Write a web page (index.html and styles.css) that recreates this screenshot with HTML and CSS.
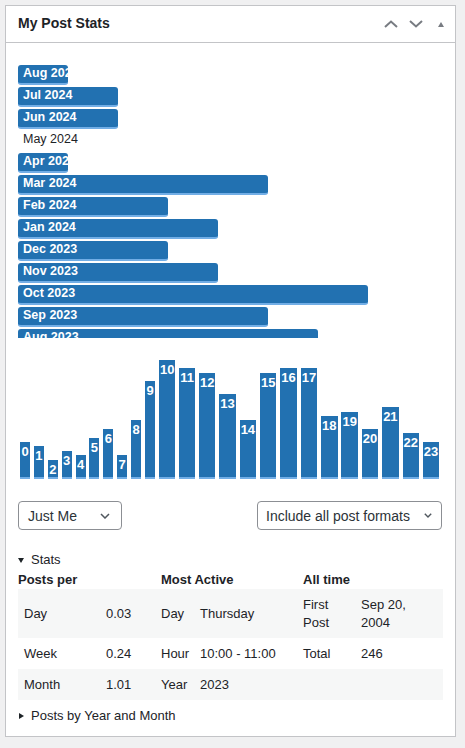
FILE: index.html
```html
<!DOCTYPE html>
<html lang="en">
<head>
<meta charset="utf-8">
<title>My Post Stats</title>
<link rel="stylesheet" href="styles.css">
</head>
<body>
<div class="postbox">
  <div class="postbox-header">
    <h2 class="title">My Post Stats</h2>
    <div class="handle-actions">
      <button class="handle-btn" aria-label="Move up">
        <svg width="14" height="8" viewBox="0 0 14 8"><polyline points="1,7 7,1.5 13,7" fill="none" stroke="#787c82" stroke-width="2"/></svg>
      </button>
      <button class="handle-btn" aria-label="Move down">
        <svg width="14" height="8" viewBox="0 0 14 8"><polyline points="1,1 7,6.5 13,1" fill="none" stroke="#787c82" stroke-width="2"/></svg>
      </button>
      <button class="handle-btn" aria-label="Toggle panel">
        <svg width="6" height="5" viewBox="0 0 6 5"><polygon points="0,5 3,0 6,5" fill="#787c82"/></svg>
      </button>
    </div>
  </div>
  <div class="inside">
    <div class="months">
      <div class="month-bar" style="width:50px">Aug 2024</div>
      <div class="month-bar" style="width:100px">Jul 2024</div>
      <div class="month-bar" style="width:100px">Jun 2024</div>
      <div class="month-bar zero">May 2024</div>
      <div class="month-bar" style="width:50px">Apr 2024</div>
      <div class="month-bar" style="width:250px">Mar 2024</div>
      <div class="month-bar" style="width:150px">Feb 2024</div>
      <div class="month-bar" style="width:200px">Jan 2024</div>
      <div class="month-bar" style="width:150px">Dec 2023</div>
      <div class="month-bar" style="width:200px">Nov 2023</div>
      <div class="month-bar" style="width:350px">Oct 2023</div>
      <div class="month-bar" style="width:250px">Sep 2023</div>
      <div class="month-bar" style="width:300px">Aug 2023</div>
      <div class="month-bar" style="width:150px">Jul 2023</div>
      <div class="month-bar" style="width:100px">Jun 2023</div>
    </div>

    <div class="hours">
      <div class="hour" style="height:37px">0</div>
      <div class="hour" style="height:33px">1</div>
      <div class="hour" style="height:19px">2</div>
      <div class="hour" style="height:28px">3</div>
      <div class="hour" style="height:24px">4</div>
      <div class="hour" style="height:41px">5</div>
      <div class="hour" style="height:50px">6</div>
      <div class="hour" style="height:24px">7</div>
      <div class="hour" style="height:59px">8</div>
      <div class="hour" style="height:98px">9</div>
      <div class="hour" style="height:119px">10</div>
      <div class="hour" style="height:111px">11</div>
      <div class="hour" style="height:106px">12</div>
      <div class="hour" style="height:85px">13</div>
      <div class="hour" style="height:59px">14</div>
      <div class="hour" style="height:106px">15</div>
      <div class="hour" style="height:111px">16</div>
      <div class="hour" style="height:111px">17</div>
      <div class="hour" style="height:63px">18</div>
      <div class="hour" style="height:67px">19</div>
      <div class="hour" style="height:50px">20</div>
      <div class="hour" style="height:72px">21</div>
      <div class="hour" style="height:46px">22</div>
      <div class="hour" style="height:37px">23</div>
    </div>

    <div class="filters">
      <div class="select select-author">
        <span>Just Me</span>
        <svg width="10" height="6" viewBox="0 0 10 6"><polyline points="1,1 5,5 9,1" fill="none" stroke="#50575e" stroke-width="1.5"/></svg>
      </div>
      <div class="select select-format">
        <span>Include all post formats</span>
        <svg width="8" height="5" viewBox="0 0 8 5"><polyline points="0.8,0.8 4,4 7.2,0.8" fill="none" stroke="#50575e" stroke-width="1.4"/></svg>
      </div>
    </div>

    <details class="section" open>
      <summary class="summary"><span class="tri-down"></span>Stats</summary>
      <table class="stats">
        <colgroup>
          <col class="c1"><col class="c2"><col class="c3"><col class="c4"><col class="c5"><col class="c6">
        </colgroup>
        <thead>
          <tr>
            <th colspan="2" class="th-first">Posts per</th>
            <th colspan="2">Most Active</th>
            <th colspan="2">All time</th>
          </tr>
        </thead>
        <tbody>
          <tr class="alt">
            <td>Day</td><td>0.03</td>
            <td>Day</td><td>Thursday</td>
            <td>First Post</td><td class="wrap">Sep 20, 2004</td>
          </tr>
          <tr>
            <td>Week</td><td>0.24</td>
            <td>Hour</td><td>10:00 - 11:00</td>
            <td>Total</td><td>246</td>
          </tr>
          <tr class="alt">
            <td>Month</td><td>1.01</td>
            <td>Year</td><td>2023</td>
            <td></td><td></td>
          </tr>
        </tbody>
      </table>
    </details>

    <details class="section section-closed">
      <summary class="summary"><span class="tri-right"></span>Posts by Year and Month</summary>
    </details>
  </div>
</div>
</body>
</html>
```

FILE: styles.css
```css
* {
  box-sizing: border-box;
}

html, body {
  margin: 0;
  padding: 0;
}

body {
  background: #f0f0f1;
  font-family: "Liberation Sans", Arial, Helvetica, sans-serif;
  font-size: 13px;
  line-height: 1.4;
  color: #1d2327;
}

.postbox {
  width: 451px;
  margin: 5px 0 0 5px;
  background: #fff;
  border: 1px solid #c3c4c7;
}

.postbox-header {
  display: flex;
  align-items: center;
  height: 37px;
  border-bottom: 1px solid #c3c4c7;
  padding: 0 2px 0 12px;
}

.title {
  flex: 1;
  margin: 0;
  font-size: 14px;
  font-weight: bold;
  line-height: 1.4;
  color: #1d2327;
}

.handle-actions {
  display: flex;
  align-items: center;
}

.handle-btn {
  width: 25px;
  height: 36px;
  padding: 0;
  margin: 0;
  border: 0;
  background: transparent;
  display: flex;
  align-items: center;
  justify-content: center;
}

.inside {
  padding: 0 12px 11px 12px;
}

.months {
  margin-top: 22px;
  height: 273px;
  overflow: hidden;
}

.month-bar {
  height: 20px;
  margin-bottom: 2px;
  padding-left: 5px;
  background: #2271b1;
  border-bottom: 2px solid #72aee6;
  border-radius: 3px;
  color: #fff;
  font-size: 12.5px;
  font-weight: bold;
  line-height: 16px;
  white-space: nowrap;
  overflow: hidden;
}

.month-bar.zero {
  width: auto;
  background: transparent;
  border-bottom-color: transparent;
  color: #1d2327;
  font-weight: normal;
  overflow: visible;
}

.hours {
  display: flex;
  align-items: flex-end;
  gap: 3.9px;
  height: 141px;
  padding-left: 2px;
}

.hour {
  min-width: 10px;
  padding: 3px 1px 0 1px;
  background: #2271b1;
  border-bottom: 2px solid #72aee6;
  color: #fff;
  font-size: 13px;
  font-weight: bold;
  line-height: 14px;
  text-align: center;
}

.filters {
  display: flex;
  justify-content: space-between;
  margin-top: 22px;
  padding-right: 1px;
}

.select {
  display: flex;
  align-items: center;
  justify-content: space-between;
  height: 29px;
  border: 1px solid #8c8f94;
  border-radius: 4px;
  background: #fff;
  color: #2c3338;
  font-size: 14px;
  line-height: 1;
}

.select-author {
  width: 104px;
  padding: 0 11px 0 9px;
}

.select-format {
  width: 185px;
  padding: 0 9px 0 8px;
}

.section {
  margin-top: 21px;
}

.summary {
  display: flex;
  align-items: center;
  list-style: none;
  cursor: pointer;
  line-height: 18px;
}

.summary::-webkit-details-marker {
  display: none;
}

.tri-down {
  width: 0;
  height: 0;
  margin-right: 7px;
  border-left: 3px solid transparent;
  border-right: 3px solid transparent;
  border-top: 5px solid #1d2327;
}

.tri-right {
  width: 0;
  height: 0;
  margin: 0 7px 0 1px;
  border-top: 3px solid transparent;
  border-bottom: 3px solid transparent;
  border-left: 5px solid #1d2327;
}

.stats {
  width: 425px;
  margin-top: 1px;
  table-layout: fixed;
  border-collapse: collapse;
  border-spacing: 0;
}

.c1 { width: 82px; }
.c2 { width: 55px; }
.c3 { width: 39px; }
.c4 { width: 103px; }
.c5 { width: 58px; }
.c6 { width: 88px; }

.stats th {
  padding: 0 6px;
  text-align: left;
  font-weight: bold;
  line-height: 19px;
}

.stats th.th-first {
  padding-left: 0;
}

.stats td {
  padding: 6.5px 6px;
  vertical-align: middle;
  line-height: 18px;
}

.stats td.wrap {
  padding-right: 14px;
}

.stats tr.alt td {
  background: #f6f7f7;
}

.section-closed {
  margin-top: 7px;
}
```
